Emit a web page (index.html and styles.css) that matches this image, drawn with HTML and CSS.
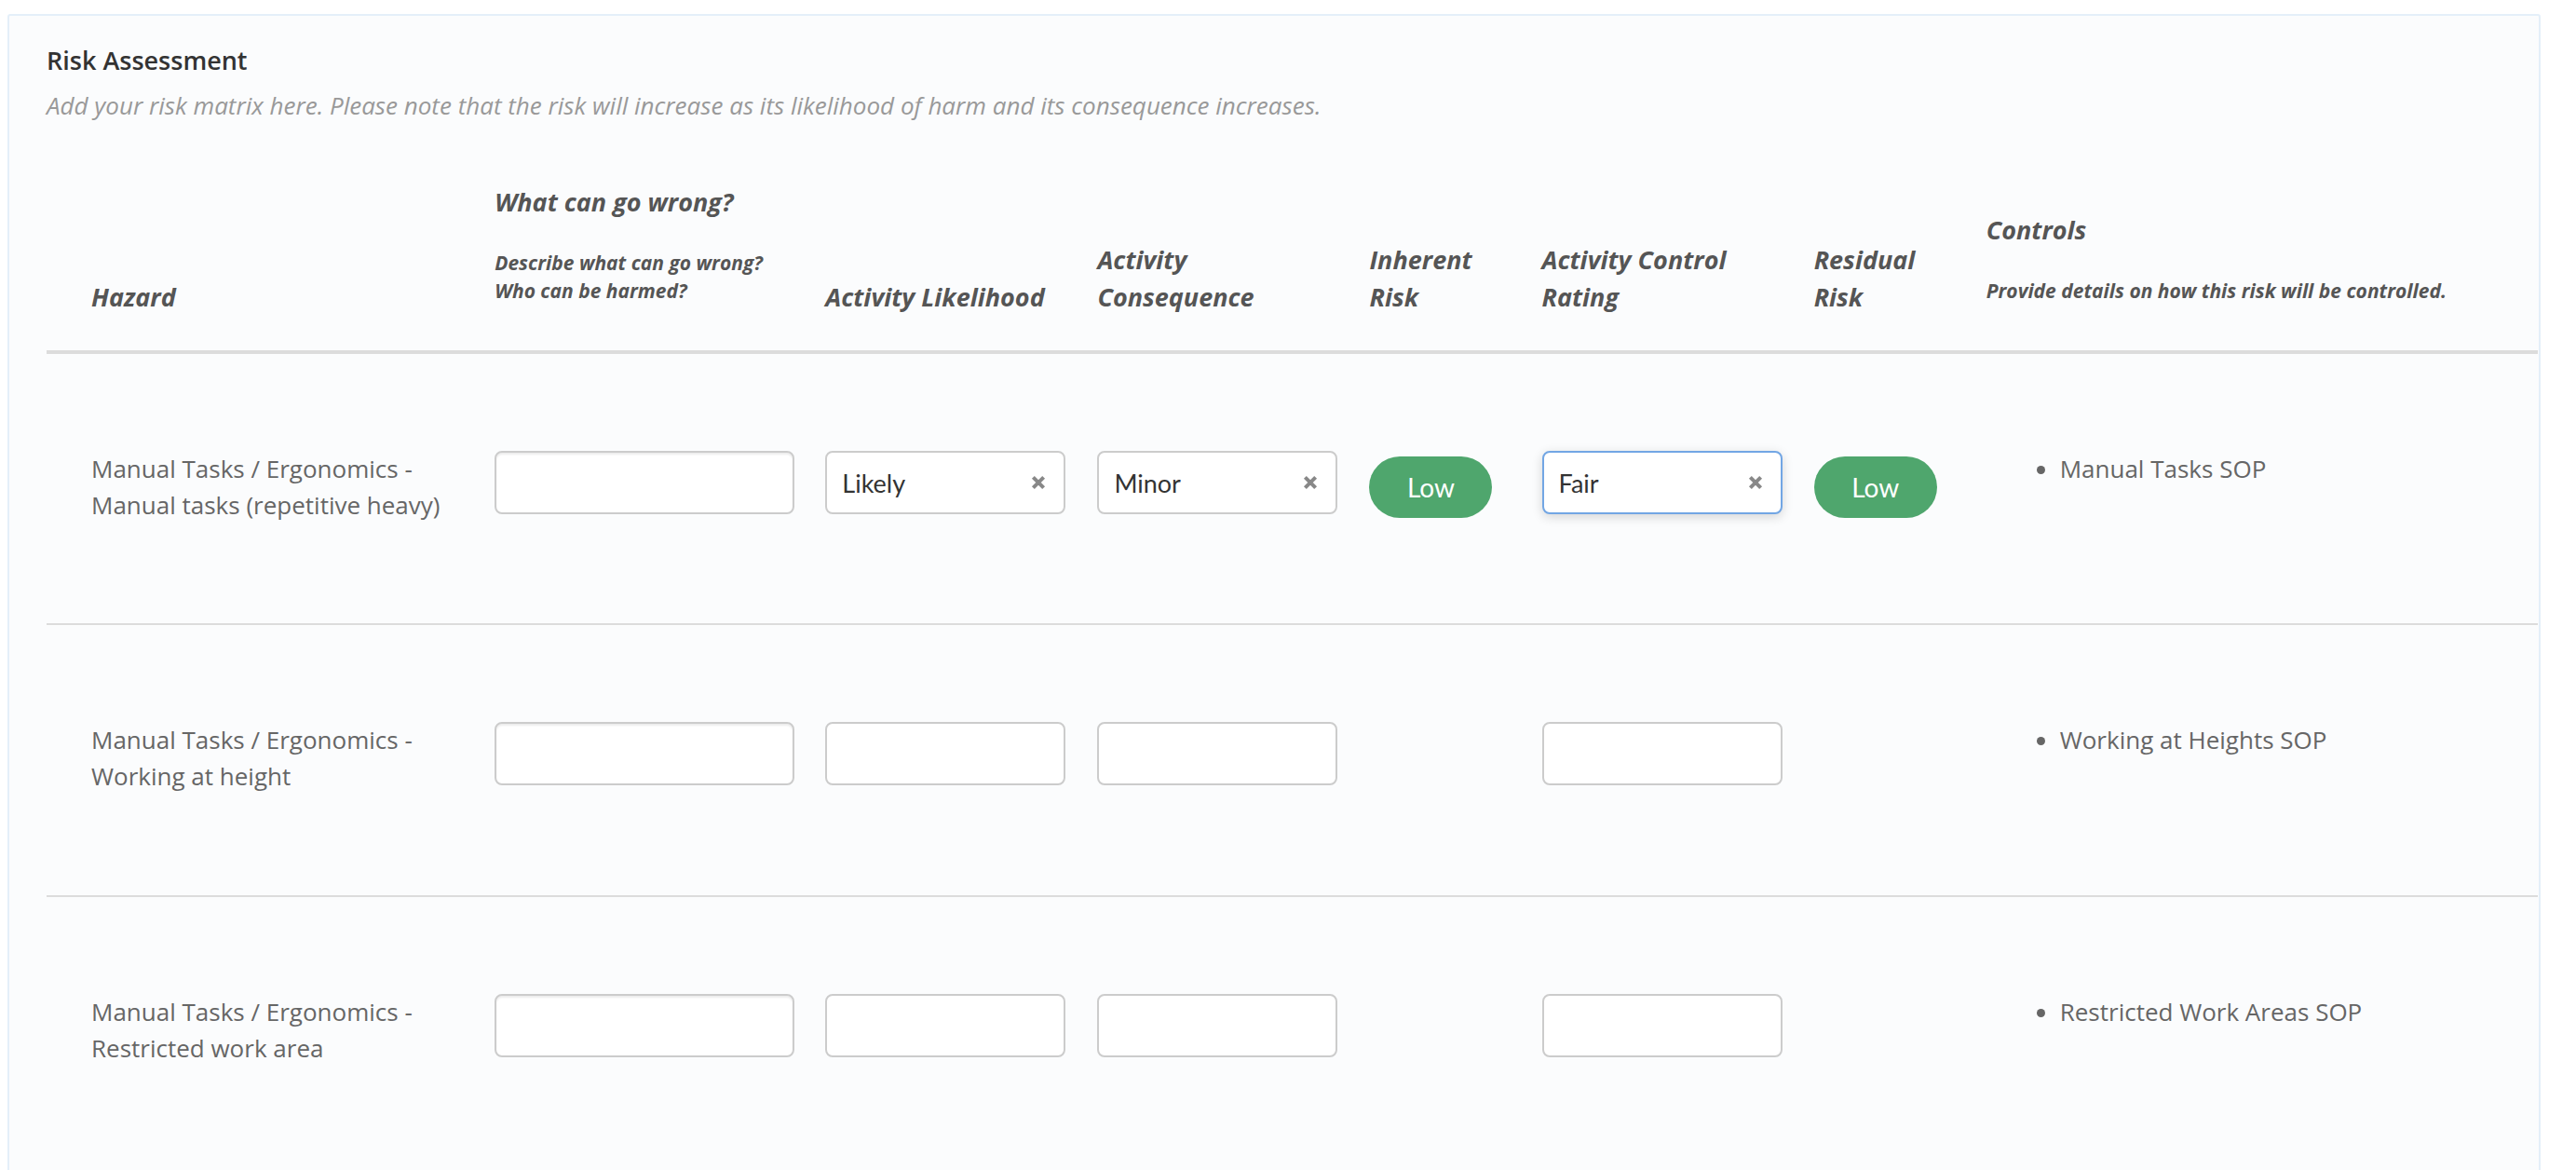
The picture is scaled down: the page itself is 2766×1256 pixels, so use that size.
FILE: index.html
```html
<!DOCTYPE html>
<html lang="en">
<head>
    <meta charset="UTF-8">
    <title>Risk Assessment</title>
    <link rel="stylesheet" href="styles.css">
</head>
<body>
    <div class="panel">
        <!-- Title and help text -->
        <h3 class="panel-title">Risk Assessment</h3>
        <p class="panel-help">Add your risk matrix here. Please note that the risk will increase as its likelihood of harm and its consequence increases.</p>

        <table class="risk-table">
            <colgroup>
                <col class="col-hazard">
                <col class="col-wrong">
                <col class="col-select">
                <col class="col-select">
                <col class="col-badge">
                <col class="col-select">
                <col class="col-badge">
                <col class="col-controls">
            </colgroup>
            <thead>
                <tr>
                    <th>Hazard</th>
                    <th>
                        <div class="th-title">What can go wrong?</div>
                        <div class="th-note">Describe what can go wrong?<br>Who can be harmed?</div>
                    </th>
                    <th>Activity Likelihood</th>
                    <th>Activity<br>Consequence</th>
                    <th>Inherent<br>Risk</th>
                    <th>Activity Control<br>Rating</th>
                    <th>Residual<br>Risk</th>
                    <th>
                        <div class="th-title">Controls</div>
                        <div class="th-note">Provide details on how this risk will be controlled.</div>
                    </th>
                </tr>
            </thead>
            <tbody>
                <tr>
                    <td class="hazard">Manual Tasks / Ergonomics - Manual tasks (repetitive heavy)</td>
                    <td><input class="field field-wide" type="text"></td>
                    <td>
                        <div class="select">
                            <span class="select-value">Likely</span>
                            <svg class="select-clear" viewBox="0 0 16 16"><path d="M3 3 L13 13 M13 3 L3 13"/></svg>
                        </div>
                    </td>
                    <td>
                        <div class="select">
                            <span class="select-value">Minor</span>
                            <svg class="select-clear" viewBox="0 0 16 16"><path d="M3 3 L13 13 M13 3 L3 13"/></svg>
                        </div>
                    </td>
                    <td><span class="risk-badge">Low</span></td>
                    <td>
                        <div class="select select-focus">
                            <span class="select-value">Fair</span>
                            <svg class="select-clear" viewBox="0 0 16 16"><path d="M3 3 L13 13 M13 3 L3 13"/></svg>
                        </div>
                    </td>
                    <td><span class="risk-badge">Low</span></td>
                    <td>
                        <ul class="controls-list">
                            <li>Manual Tasks SOP</li>
                        </ul>
                    </td>
                </tr>
                <tr>
                    <td class="hazard">Manual Tasks / Ergonomics - Working at height</td>
                    <td><input class="field field-wide" type="text"></td>
                    <td><div class="select"></div></td>
                    <td><div class="select"></div></td>
                    <td></td>
                    <td><div class="select"></div></td>
                    <td></td>
                    <td>
                        <ul class="controls-list">
                            <li>Working at Heights SOP</li>
                        </ul>
                    </td>
                </tr>
                <tr>
                    <td class="hazard">Manual Tasks / Ergonomics - Restricted work area</td>
                    <td><input class="field field-wide" type="text"></td>
                    <td><div class="select"></div></td>
                    <td><div class="select"></div></td>
                    <td></td>
                    <td><div class="select"></div></td>
                    <td></td>
                    <td>
                        <ul class="controls-list">
                            <li>Restricted Work Areas SOP</li>
                        </ul>
                    </td>
                </tr>
            </tbody>
        </table>
    </div>
</body>
</html>
```

FILE: styles.css
```css
/* Reset */
* {
    margin: 0;
    padding: 0;
    box-sizing: border-box;
}

body {
    font-family: "Open Sans", Arial, sans-serif;
    background: #ffffff;
    color: #666;
    padding: 15px 38px 0 8px;
}

/* Card */
.panel {
    background: #fbfcfd;
    border: 2px solid #e4eff9;
    border-radius: 3px;
    padding: 30px 0 40px 40px;
    min-height: 1400px;
}

.panel-title {
    font-size: 27px;
    font-weight: 600;
    line-height: 36px;
    color: #333;
}

.panel-help {
    font-size: 26px;
    font-style: italic;
    line-height: 36px;
    color: #999;
    margin-top: 12px;
}

/* Risk table */
.risk-table {
    width: 2675px;
    table-layout: fixed;
    border-collapse: collapse;
    margin-top: 66px;
}

.col-hazard { width: 481px; }
.col-wrong { width: 355px; }
.col-select { width: 292px; }
.col-badge { width: 185px; }
.col-controls { width: 592px; }

.risk-table th {
    text-align: left;
    vertical-align: bottom;
    font-size: 27px;
    font-weight: 700;
    font-style: italic;
    line-height: 40px;
    color: #555;
    padding: 0 20px 37px 0;
    border-bottom: 4px solid #dcdcdc;
}

.risk-table th:first-child {
    padding-left: 48px;
}

.th-title {
    margin-bottom: 30px;
}

.th-note {
    font-size: 21px;
    line-height: 30px;
    margin-bottom: 12px;
}

.risk-table td {
    vertical-align: top;
    height: 292px;
    padding: 104px 0 0 0;
    border-bottom: 2px solid #dcdcdc;
}

.risk-table tbody tr:last-child td {
    border-bottom: none;
}

.risk-table td.hazard {
    padding-left: 48px;
    padding-right: 33px;
    font-size: 26px;
    line-height: 39px;
    color: #666;
}

/* Inputs */
.field,
.select {
    display: flex;
    align-items: center;
    width: 258px;
    height: 68px;
    background: #fff;
    border: 2px solid #cccccc;
    border-radius: 8px;
    box-shadow: inset 0 2px 2px rgba(0, 0, 0, 0.075);
}

.field-wide {
    width: 322px;
}

.select {
    justify-content: space-between;
    padding: 0 18px 0 16px;
    box-shadow: none;
}

.select-value {
    font-family: Lato, "Open Sans", sans-serif;
    font-size: 27px;
    color: #333;
}

.select-clear {
    width: 18px;
    height: 18px;
    fill: none;
    stroke: #888;
    stroke-width: 3.6;
}

.select-focus {
    border-color: #72a6e4;
    box-shadow: 0 3px 12px rgba(0, 0, 0, 0.16);
}

/* Risk badges */
.risk-badge {
    display: inline-flex;
    align-items: center;
    justify-content: center;
    width: 132px;
    height: 66px;
    margin-top: 6px;
    border-radius: 33px;
    background: #4fa66d;
    color: #fff;
    font-family: Lato, "Open Sans", sans-serif;
    font-size: 28px;
}

/* Controls */
.controls-list {
    padding-left: 79px;
    font-size: 26px;
    line-height: 39px;
    color: #666;
}
```
